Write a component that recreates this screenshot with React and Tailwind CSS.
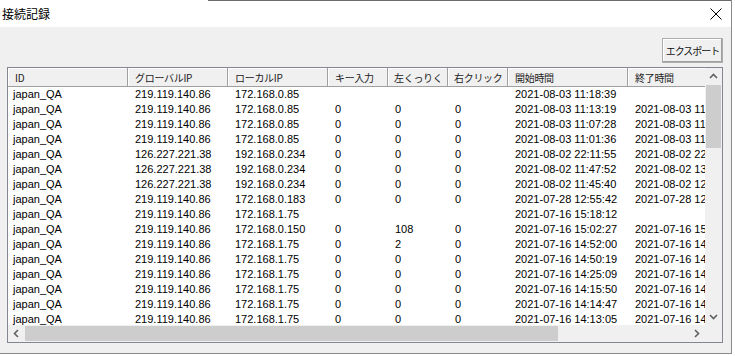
import React from 'react'

const cols = [
  { label: 'ID', w: 'w-[120px]', pad: 'pl-[5px]', hpad: 'pl-[7px]' },
  { label: 'グローバルIP', w: 'w-[100px]', pad: 'pl-[7px]', hpad: 'pl-[7px]' },
  { label: 'ローカルIP', w: 'w-[100px]', pad: 'pl-[7px]', hpad: 'pl-[7px]' },
  { label: 'キー入力', w: 'w-[60px]', pad: 'pl-[7px]', hpad: 'pl-[7px]' },
  { label: '左くっりく', w: 'w-[60px]', pad: 'pl-[7px]', hpad: 'pl-[6px]' },
  { label: '右クリック', w: 'w-[60px]', pad: 'pl-[7px]', hpad: 'pl-[6px]' },
  { label: '開始時間', w: 'w-[120px]', pad: 'pl-[7px]', hpad: 'pl-[7px]' },
  { label: '終了時間', w: 'w-[120px]', pad: 'pl-[7px]', hpad: 'pl-[7px]' },
]

const G = '219.119.140.86'
const K = '126.227.221.38'

const rows = [
  ['japan_QA', G, '172.168.0.85', '', '', '', '2021-08-03 11:18:39', ''],
  ['japan_QA', G, '172.168.0.85', '0', '0', '0', '2021-08-03 11:13:19', '2021-08-03 11:17:02'],
  ['japan_QA', G, '172.168.0.85', '0', '0', '0', '2021-08-03 11:07:28', '2021-08-03 11:12:44'],
  ['japan_QA', G, '172.168.0.85', '0', '0', '0', '2021-08-03 11:01:36', '2021-08-03 11:06:51'],
  ['japan_QA', K, '192.168.0.234', '0', '0', '0', '2021-08-02 22:11:55', '2021-08-02 22:40:13'],
  ['japan_QA', K, '192.168.0.234', '0', '0', '0', '2021-08-02 11:47:52', '2021-08-02 13:02:10'],
  ['japan_QA', K, '192.168.0.234', '0', '0', '0', '2021-08-02 11:45:40', '2021-08-02 12:30:05'],
  ['japan_QA', G, '172.168.0.183', '0', '0', '0', '2021-07-28 12:55:42', '2021-07-28 12:58:31'],
  ['japan_QA', G, '172.168.1.75', '', '', '', '2021-07-16 15:18:12', ''],
  ['japan_QA', G, '172.168.0.150', '0', '108', '0', '2021-07-16 15:02:27', '2021-07-16 15:10:48'],
  ['japan_QA', G, '172.168.1.75', '0', '2', '0', '2021-07-16 14:52:00', '2021-07-16 14:58:19'],
  ['japan_QA', G, '172.168.1.75', '0', '0', '0', '2021-07-16 14:50:19', '2021-07-16 14:51:40'],
  ['japan_QA', G, '172.168.1.75', '0', '0', '0', '2021-07-16 14:25:09', '2021-07-16 14:49:02'],
  ['japan_QA', G, '172.168.1.75', '0', '0', '0', '2021-07-16 14:15:50', '2021-07-16 14:24:33'],
  ['japan_QA', G, '172.168.1.75', '0', '0', '0', '2021-07-16 14:14:47', '2021-07-16 14:15:20'],
  ['japan_QA', G, '172.168.1.75', '0', '0', '0', '2021-07-16 14:13:05', '2021-07-16 14:14:11'],
]

function Chevron({ dir }) {
  const pts = {
    up: '1,6 4.5,2.5 8,6',
    down: '1,3 4.5,6.5 8,3',
    left: '6,1 2.5,4.5 6,8',
    right: '3,1 6.5,4.5 3,8',
  }[dir]
  return (
    <svg width="9" height="9" viewBox="0 0 9 9">
      <polyline points={pts} fill="none" stroke="#606060" strokeWidth="1.6" />
    </svg>
  )
}

export default function App() {
  return (
    <div className="w-[735px] h-[356px] bg-white overflow-hidden font-['Liberation_Sans',sans-serif] text-black">
      <div className="w-[732px] h-[354px] flex flex-col border-r border-b border-[#8a8a8a]">
        {/* top edge of window behind */}
        <div className="h-[1px] flex">
          <div className="w-[208px]" />
          <div className="flex-1 bg-[#6a6a6a]" />
        </div>

        {/* Title bar */}
        <div className="h-[26px] bg-white flex items-center justify-between pl-[2px] pr-[9px]">
          <span className="text-[12px] font-['Noto_Sans_CJK_JP',sans-serif] leading-none">接続記録</span>
          <svg width="12" height="12" viewBox="0 0 12 12">
            <path d="M0.5 0.5 L11.5 11.5 M11.5 0.5 L0.5 11.5" stroke="#000" strokeWidth="1" />
          </svg>
        </div>

        {/* Body */}
        <div className="flex-1 bg-[#f0f0f0] flex flex-col">
          <div className="flex justify-end pr-[8px] pt-[11px]">
            <button className="w-[61px] h-[25px] p-0 bg-[#f0f0f0] border border-[#adadad] shadow-[inset_-1px_-1px_0_#a0a0a0,inset_1px_1px_0_#ffffff] text-[10px] font-['Noto_Sans_CJK_JP',sans-serif] text-[#111] tracking-[-1px] whitespace-nowrap flex items-center justify-center">
              エクスポート
            </button>
          </div>

          {/* List view */}
          <div className="mt-[4px] ml-[7px] w-[716px] h-[276px] border border-[#828790] bg-white flex flex-col">
            <div className="flex-1 flex min-h-0">
              <div className="flex-1 overflow-hidden">
                {/* Header */}
                <div className="flex h-[19px] w-max">
                  {cols.map((c, i) => (
                    <div
                      key={i}
                      className={`${c.w} ${c.hpad} shrink-0 h-full bg-[#f0f0f0] border-r border-b border-[#a0a0a0] shadow-[inset_1px_1px_0_#ffffff] flex items-center text-[10px] font-['Noto_Sans_CJK_JP',sans-serif] tracking-[-0.3px] text-[#222] whitespace-nowrap overflow-hidden`}
                    >
                      {c.label}
                    </div>
                  ))}
                </div>
                {/* Rows */}
                {rows.map((r, ri) => (
                  <div key={ri} className="flex h-[15px] w-max text-[11px] leading-[15px]">
                    {r.map((v, ci) => (
                      <div key={ci} className={`${cols[ci].w} ${cols[ci].pad} shrink-0 whitespace-nowrap overflow-hidden`}>
                        {v}
                      </div>
                    ))}
                  </div>
                ))}
              </div>

              {/* Vertical scrollbar */}
              <div className="w-[17px] bg-[#f0f0f0] flex flex-col">
                <div className="h-[17px] flex items-center justify-center">
                  <Chevron dir="up" />
                </div>
                <div className="flex-1 px-[1px]">
                  <div className="h-[63px] bg-[#cdcdcd]" />
                </div>
                <div className="h-[17px] flex items-center justify-center">
                  <Chevron dir="down" />
                </div>
              </div>
            </div>

            {/* Horizontal scrollbar */}
            <div className="h-[17px] flex bg-[#f0f0f0]">
              <div className="w-[17px] flex items-center justify-center">
                <Chevron dir="left" />
              </div>
              <div className="flex-1 py-[1px] flex">
                <div className="w-[533px] bg-[#cdcdcd]" />
              </div>
              <div className="w-[17px] flex items-center justify-center">
                <Chevron dir="right" />
              </div>
              <div className="w-[17px] bg-[#f0f0f0]" />
            </div>
          </div>
        </div>
      </div>
    </div>
  )
}
